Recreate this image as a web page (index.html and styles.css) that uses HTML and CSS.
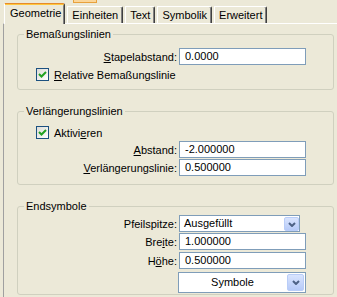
FILE: index.html
```html
<!DOCTYPE html>
<html lang="de">
<head>
    <meta charset="UTF-8">
    <meta name="viewport" content="width=device-width, initial-scale=1.0">
    <title>Bemaßung</title>
    <link rel="stylesheet" href="styles.css">
</head>
<body>
    <div class="peek"></div>
    <div class="tabs">
        <div class="tab active">Geometrie</div>
        <div class="tab">Einheiten</div>
        <div class="tab">Text</div>
        <div class="tab">Symbolik</div>
        <div class="tab">Erweitert</div>
    </div>
    <div class="panel">
        <fieldset class="group group-dim">
            <legend>Bemaßungslinien</legend>
            <div class="row">
                <label><u>S</u>tapelabstand:</label>
                <div class="field">0.0000</div>
            </div>
            <div class="check">
                <span class="box"><svg width="11" height="11" viewBox="0 0 11 11"><path d="M2 5 L4.5 7.5 L9 3" fill="none" stroke="#21a121" stroke-width="2"/></svg></span>
                <span><u>R</u>elative Bemaßungslinie</span>
            </div>
        </fieldset>
        <fieldset class="group group-ext">
            <legend>Verlängerungslinien</legend>
            <div class="check">
                <span class="box"><svg width="11" height="11" viewBox="0 0 11 11"><path d="M2 5 L4.5 7.5 L9 3" fill="none" stroke="#21a121" stroke-width="2"/></svg></span>
                <span>Aktivi<u>e</u>ren</span>
            </div>
            <div class="row first">
                <label><u>A</u>bstand:</label>
                <div class="field">-2.000000</div>
            </div>
            <div class="row">
                <label><u>V</u>erlängerungslinie:</label>
                <div class="field">0.500000</div>
            </div>
        </fieldset>
        <fieldset class="group group-end">
            <legend>Endsymbole</legend>
            <div class="row first">
                <label>Pfeilspitze:</label>
                <div class="select">
                    <span>Ausgefüllt</span>
                    <span class="btn"><svg width="8" height="5" viewBox="0 0 8 5"><path d="M1 1 L4 4 L7 1" fill="none" stroke="#4d6185" stroke-width="2"/></svg></span>
                </div>
            </div>
            <div class="row">
                <label>Bre<u>i</u>te:</label>
                <div class="field">1.000000</div>
            </div>
            <div class="row gap2">
                <label>H<u>ö</u>he:</label>
                <div class="field">0.500000</div>
            </div>
            <div class="row gap3">
                <label></label>
                <div class="select wide">
                    <span class="value">Symbole</span>
                    <span class="btn"><svg width="8" height="5" viewBox="0 0 8 5"><path d="M1 1 L4 4 L7 1" fill="none" stroke="#4d6185" stroke-width="2"/></svg></span>
                </div>
            </div>
        </fieldset>
    </div>
</body>
</html>
```

FILE: styles.css
```css
body {
    margin: 0;
    width: 337px;
    height: 297px;
    overflow: hidden;
    position: relative;
    background-color: #ece9d8;
    font-family: "Liberation Sans", Arial, sans-serif;
    font-size: 11px;
    color: #000;
}
.peek {
    position: absolute;
    left: 73px;
    top: 0;
    width: 24px;
    height: 3px;
    box-sizing: border-box;
    border: 1px solid #e8a13c;
    border-top: none;
    background-color: #fbd699;
}
.tabs {
    display: flex;
    align-items: flex-end;
    gap: 2px;
    height: 23px;
    padding-left: 4px;
}
.tab {
    height: 16px;
    line-height: 16px;
    padding: 0 4px;
    border-top: 1px solid #fff;
    border-left: 1px solid #fff;
    border-right: 1px solid #404040;
    border-top-right-radius: 2px;
    box-shadow: inset -1px 0 #808080;
}
.tab.active {
    position: relative;
    z-index: 1;
    height: 20px;
    line-height: 18px;
    margin-bottom: -1px;
    padding: 0 3px 0 5px;
    border-top: 1px solid #e68b2c;
    background-color: #ece9d8;
    box-shadow: inset 0 1px #ffc73c, inset -1px 0 #808080;
}
.panel {
    margin-left: 3px;
    border-top: 1px solid #fff;
    border-left: 1px solid #a0a0a0;
    padding: 4px 3px 0 13px;
    height: 280px;
}
.group {
    margin: 0;
    padding: 0;
    min-width: 0;
    border: 1px solid #d0d0bf;
    border-radius: 3px;
}
.group + .group {
    margin-top: 15px;
}
.group legend {
    margin-left: 6px;
    padding: 0 2px;
    line-height: 13px;
}
.group-dim {
    padding: 6px 0 6px;
}
.group-ext {
    padding: 5px 0 8px;
}
.group-end {
    padding: 2px 0 1px;
}
.row {
    display: flex;
    align-items: center;
    margin-top: 1px;
}
.row.first {
    margin-top: 0;
}
.row.gap2 {
    margin-top: 2px;
}
.row.gap3 {
    margin-top: 3px;
}
.row label {
    width: 159px;
    text-align: right;
}
.field {
    width: 127px;
    height: 17px;
    box-sizing: border-box;
    margin-left: 2px;
    padding-left: 5px;
    border: 1px solid #7f9db9;
    background-color: #fff;
    line-height: 15px;
}
.select {
    display: flex;
    justify-content: space-between;
    width: 121px;
    height: 17px;
    box-sizing: border-box;
    margin-left: 2px;
    padding-left: 4px;
    border: 1px solid #7f9db9;
    background-color: #fff;
    line-height: 15px;
}
.btn {
    display: flex;
    align-items: center;
    justify-content: center;
    width: 15px;
    height: 14px;
    margin-top: 1px;
    box-sizing: border-box;
    border: 1px solid #b9cdf8;
    border-radius: 2px;
    background: linear-gradient(#d9e4fe, #b6caf8);
}
.select.wide {
    width: 128px;
    height: 21px;
    margin-left: 1px;
    padding-left: 0;
    line-height: 19px;
}
.select.wide .value {
    flex: 1;
    text-align: center;
}
.select.wide .btn {
    width: 17px;
    height: 17px;
    margin: 1px;
}
.check {
    display: flex;
    align-items: center;
    gap: 5px;
    height: 17px;
    margin-top: 1px;
    padding-left: 18px;
}
.box {
    display: flex;
    align-items: center;
    justify-content: center;
    width: 13px;
    height: 13px;
    box-sizing: border-box;
    border: 1px solid #1c5180;
    background: linear-gradient(135deg, #dcdcd7, #fff);
}
```
